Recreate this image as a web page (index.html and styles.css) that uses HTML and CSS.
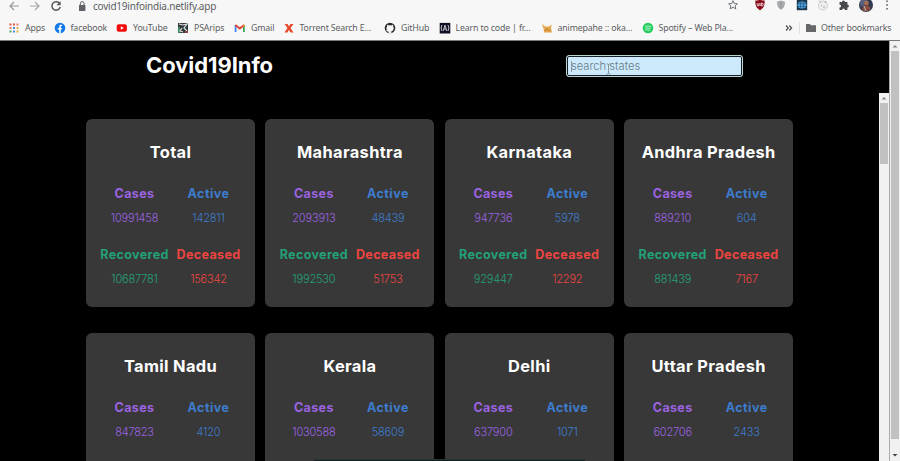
FILE: index.html
```html
<!DOCTYPE html>
<html lang="en">
<head>
<meta charset="utf-8">
<title>Covid19Info</title>
<link rel="stylesheet" href="styles.css">
</head>
<body>
<div class="browser">
  <div class="toolbar">
    <svg class="ic" viewBox="0 0 12 12"><path d="M11 6H2M6 2L2 6l4 4" fill="none" stroke="#96999c" stroke-width="1.2"/></svg>
    <svg class="ic" viewBox="0 0 12 12"><path d="M1 6h9M6 2l4 4-4 4" fill="none" stroke="#a5a7a9" stroke-width="1.2"/></svg>
    <svg class="ic" viewBox="0 0 12 12"><path d="M9.7 3.7A4.2 4.2 0 1 0 10.2 7" fill="none" stroke="#55585b" stroke-width="1.5"/><path d="M10.6 1v4.2H6.4z" fill="#55585b"/></svg>
    <svg class="ic lock" viewBox="0 0 12 12"><path d="M3 5h6.4v6H3z" fill="#5f6368"/><path d="M4.4 5V3.4a1.8 1.8 0 0 1 3.6 0V5" fill="none" stroke="#5f6368"/></svg>
    <span class="url">covid19infoindia.netlify.app</span>
    <div class="tools">
      <svg class="ic" viewBox="0 0 12 12"><path d="M6 1.7l1.3 2.8 3.1.3-2.3 2.1.7 3L6 8.3 3.2 9.900l.7-3L1.600 4.800l3.100-.3z" fill="none" stroke="#5f6368" stroke-width=".9"/></svg>
      <svg class="ic" viewBox="0 0 12 12"><path d="M6 .5c1.500 1 3 1.100 4.700 1.100 0 4.400-.5 7.400-4.700 9.700C1.800 9 1.300 6 1.300 1.600 3 1.600 4.500 1.500 6 .5z" fill="#880d18"/><path d="M3.200 4.300v1.900a.8.8 0 0 0 1.600 0V4.300M6 4v3M7.300 4.200h1c1.300 0 1.300 2.600 0 2.600h-1z" fill="none" stroke="#fff" stroke-width=".8"/></svg>
      <svg class="ic" viewBox="0 0 12 12"><path d="M6 1.500l4 1.300c0 4-.8 6.200-4 8-3.200-1.800-4-4-4-8z" fill="#a9abad"/><path d="M6 3v6.500" stroke="#8f9294"/></svg>
      <svg class="ic" viewBox="0 0 12 12"><path d="M.8.8h10.400v10.400H.8z" fill="#19364c"/><ellipse cx="6" cy="6" rx="4.500" ry="3.500" fill="#4c9dd5"/><path d="M2 4.500h8M2 7.500h8M4.500 2v8M7.500 2v8" stroke="#245d87" stroke-width=".7"/></svg>
      <svg class="ic" viewBox="0 0 12 12"><circle cx="6" cy="6.500" r="4.500" fill="#eee" stroke="#cfcfcf"/><path d="M2 1.500l2 2M4 6l1 1M8 4l1-2M6 8h2" stroke="#aaa"/></svg>
      <svg class="ic" viewBox="0 0 12 12"><path d="M1.500 3H4a1.500 1.500 0 0 1 3 0h2.400v2.600a1.500 1.500 0 0 1 0 3V11H7a1.500 1.500 0 0 0-3 0H1.500V8.500a1.500 1.500 0 0 0 0-3z" fill="#484b4e"/></svg>
      <svg class="ic avatar" viewBox="0 0 14 14"><circle cx="7" cy="7" r="7" fill="#303a52"/><path d="M1 4a7 7 0 0 1 8-3.500L7 6 2 9z" fill="#56617d"/><circle cx="7.500" cy="5" r="2.300" fill="#a96e50"/><path d="M3 12c0-6 8-6 8.500-1A7 7 0 0 1 3 12z" fill="#8c4c3c"/><path d="M5 8l2 5" stroke="#bbb"/></svg>
      <svg class="ic" viewBox="0 0 12 12"><path d="M5.300 1.500h1.500V3H5.300zM5.300 5.200h1.500v1.500H5.300zM5.300 9h1.500v1.500H5.300z" fill="#55585b"/></svg>
    </div>
  </div>
  <div class="bookmarks">
    <div class="bm"><svg class="ic" viewBox="0 0 12 12"><path d="M1.500 1.500h2v2h-2zM5 1.500h2v2H5z" fill="#df5549"/><path d="M8.500 1.500h2v2h-2zM1.500 5h2v2h-2z" fill="#e77d62"/><path d="M5 5h2v2H5zM5 8.500h2v2H5z" fill="#4b8ee8"/><path d="M8.500 5h2v2h-2zM8.500 8.500h2v2h-2z" fill="#e5b23c"/><path d="M1.500 8.500h2v2h-2z" fill="#4ca667"/></svg><span>Apps</span></div>
    <div class="bm"><svg class="ic" viewBox="0 0 12 12"><circle cx="6" cy="6" r="5.300" fill="#1679e8"/><path d="M5.200 11.300V7.500H3.800V5.900h1.400V4.700c0-1.700 1-2.300 2.900-1.900v1.300c-1-.1-1.300.1-1.300.8v1H8l-.3 1.600h-.9v3.800z" fill="#fff"/></svg><span>facebook</span></div>
    <div class="bm"><svg class="ic" viewBox="0 0 12 12"><rect x=".7" y="2.300" width="10.200" height="7.400" rx="2" fill="#f20d0d"/><path d="M4.800 4.300L7.800 6l-3 1.700z" fill="#fff"/></svg><span>YouTube</span></div>
    <div class="bm"><svg class="ic" viewBox="0 0 12 12"><path d="M1 1h10v10H1z" fill="#303c3c"/><path d="M1 5h2v6H1z" fill="#3f8a61"/><path d="M2 2l4 1 4-1-3 4 3 3M5 6l-2 3 3 1" fill="none" stroke="#ddd" stroke-width="1.200"/><path d="M8 9h3v2H8z" fill="#963e3e"/></svg><span>PSArips</span></div>
    <div class="bm"><svg class="ic" viewBox="0 0 12 12"><path d="M1.600 10V3" stroke="#4285f4" stroke-width="1.800"/><path d="M9.900 10V3" stroke="#34a853" stroke-width="1.800"/><path d="M1.300 3l4.500 3.500L10.200 3" fill="none" stroke="#e04438" stroke-width="1.900"/><path d="M8.900 4.100l1.900-1.500v2h-1.900z" fill="#f1b51d"/></svg><span>Gmail</span></div>
    <div class="bm"><svg class="ic" viewBox="0 0 12 12"><path d="M1.500 2h3L6 4.300 7.500 2h3L7.600 6l2.900 4.500h-3L6 8l-1.500 2.500h-3L4.400 6z" fill="#e64b2e"/></svg><span>Torrent Search E...</span></div>
    <div class="bm"><svg class="ic" viewBox="0 0 12 12"><circle cx="6" cy="6" r="5.300" fill="#282a2d"/><path d="M4.600 11.600V9.300C2.900 9 2.300 7.700 2.500 6c0-.7.200-1.100.6-1.500-.2-.6-.1-1.200.1-1.700.6 0 1.200.3 1.700.7.800-.2 1.600-.2 2.400 0 .5-.4 1.100-.7 1.700-.7.200.5.200 1.100.1 1.700.4.400.6.900.6 1.500 0 2-.8 3-2.300 3.300v2.300z" fill="#f6f6f6"/><path d="M2.200 8.300c.8.300.8 1.500 2.400 1.300" fill="none" stroke="#f6f6f6" stroke-width=".7"/></svg><span>GitHub</span></div>
    <div class="bm"><svg class="ic" viewBox="0 0 12 12"><path d="M.7.900h10.600v10.600H.7z" fill="#101126"/><path d="M3 3q-1.800 3 0 6M9 3q1.800 3 0 6M4.200 9L6 3.200 7.800 9M5 7h2" fill="none" stroke="#eee" stroke-width=".8"/></svg><span>Learn to code | fr...</span></div>
    <div class="bm"><svg class="ic" viewBox="0 0 12 12"><path d="M.8 1.700L4 4.500l3.500.2 3.200-2.200-.7 3 .8 5H3L2.700 7z" fill="#e8a747"/><path d="M3.500 8.500l3-1 3 1.500M5 5.500l1 1" fill="none" stroke="#a7652b" stroke-width=".7"/></svg><span>animepahe :: oka...</span></div>
    <div class="bm"><svg class="ic" viewBox="0 0 12 12"><circle cx="6" cy="6" r="5.300" fill="#25ce60"/><path d="M2.900 4.300q3.400-1 6.400.6M3.200 6.200q3-.8 5.400.6M3.500 8q2.400-.6 4.400.5" fill="none" stroke="#c7f4d5" stroke-width=".9"/></svg><span>Spotify – Web Pla...</span></div>
    <svg class="ic more" viewBox="0 0 12 12"><path d="M3 3.500L5.300 6 3 8.500M6.300 3.500L8.600 6 6.300 8.500" fill="none" stroke="#4c4f52" stroke-width="1.200"/></svg>
    <div class="other"><svg class="ic" viewBox="0 0 12 12"><path d="M1 2h3.800L6 3.200h5V10H1z" fill="#65686b"/></svg><span>Other bookmarks</span></div>
  </div>
</div>
<div class="viewport">
  <div class="page">
    <header class="header">
      <h1>Covid19Info</h1>
      <div class="search"><span>search states</span>
        <svg class="caret" viewBox="0 0 5 12"><path d="M.5 1h1.500l.5.500.5-.5h1.500M2.500 1.500v9M.5 11h1.500l.5-.5.5.5h1.500" fill="none" stroke="#65747c" stroke-width=".7"/></svg></div>
    </header>
    <div class="body">
      <main class="cards">
        <section class="card"><h2>Total</h2><div class="stats">
          <div class="stat cases"><b>Cases</b><span>10991458</span></div><div class="stat active"><b>Active</b><span>142811</span></div>
          <div class="stat rec"><b>Recovered</b><span>10687781</span></div><div class="stat dec"><b>Deceased</b><span>156342</span></div></div></section>
        <section class="card"><h2>Maharashtra</h2><div class="stats">
          <div class="stat cases"><b>Cases</b><span>2093913</span></div><div class="stat active"><b>Active</b><span>48439</span></div>
          <div class="stat rec"><b>Recovered</b><span>1992530</span></div><div class="stat dec"><b>Deceased</b><span>51753</span></div></div></section>
        <section class="card"><h2>Karnataka</h2><div class="stats">
          <div class="stat cases"><b>Cases</b><span>947736</span></div><div class="stat active"><b>Active</b><span>5978</span></div>
          <div class="stat rec"><b>Recovered</b><span>929447</span></div><div class="stat dec"><b>Deceased</b><span>12292</span></div></div></section>
        <section class="card"><h2>Andhra Pradesh</h2><div class="stats">
          <div class="stat cases"><b>Cases</b><span>889210</span></div><div class="stat active"><b>Active</b><span>604</span></div>
          <div class="stat rec"><b>Recovered</b><span>881439</span></div><div class="stat dec"><b>Deceased</b><span>7167</span></div></div></section>
        <section class="card"><h2>Tamil Nadu</h2><div class="stats">
          <div class="stat cases"><b>Cases</b><span>847823</span></div><div class="stat active"><b>Active</b><span>4120</span></div></div></section>
        <section class="card"><h2>Kerala</h2><div class="stats">
          <div class="stat cases"><b>Cases</b><span>1030588</span></div><div class="stat active"><b>Active</b><span>58609</span></div></div></section>
        <section class="card"><h2>Delhi</h2><div class="stats">
          <div class="stat cases"><b>Cases</b><span>637900</span></div><div class="stat active"><b>Active</b><span>1071</span></div></div></section>
        <section class="card"><h2>Uttar Pradesh</h2><div class="stats">
          <div class="stat cases"><b>Cases</b><span>602706</span></div><div class="stat active"><b>Active</b><span>2433</span></div></div></section>
      </main>
      <div class="scroll inner"><svg class="arrow" viewBox="0 0 10 10"><path d="M2.500 6.500L5 4l2.500 2.500z" fill="#888"/></svg><div class="thumb"></div></div>
    </div>
  </div>
  <div class="scroll outer"><svg class="arrow" viewBox="0 0 10 10"><path d="M2.500 6.500L5 4l2.500 2.500z" fill="#888"/></svg><div class="thumb"></div><svg class="arrow down" viewBox="0 0 10 10"><path d="M2.500 4L5 6.500 7.500 4z" fill="#444"/></svg></div>
  <div class="strip"></div>
</div>
</body>
</html>
```
FILE: styles.css
```css
* { box-sizing: border-box; }
body { margin: 0; width: 900px; height: 461px; overflow: hidden; background: #000; font-family: Inter, "Open Sans", sans-serif; display: flex; flex-direction: column; }
.browser { height: 41px; flex: none; background: #f7f7f7; border-bottom: 1px solid #777b7a; font-family: "Noto Sans", sans-serif; color: #5b5e61; overflow: hidden; }
.ic { width: 12px; height: 12px; display: block; flex: none; }
.toolbar { height: 12px; display: grid; grid-template-columns: 21px 21px 26px 17px 1fr 173px; padding-left: 8px; align-items: center; }
.toolbar .ic { margin-top: -1px; }
.url { font-size: 10px; line-height: 12px; letter-spacing: -.22px; white-space: nowrap; }
.tools { display: grid; grid-template-columns: 26.5px 21px 21px 21px 21px 21px 22px 12px; }
.toolbar .avatar { width: 14px; height: 14px; margin-top: -2px; }
.bookmarks { height: 28px; margin-top: 2px; display: grid; grid-template-columns: 45.500px 62.500px 61px 57px 48.500px 101.500px 54.500px 102px 101px 141.500px 17px 1fr; padding-left: 8px; align-items: center; font-size: 8.800px; letter-spacing: -.16px; white-space: nowrap; }
.bm { display: flex; align-items: center; gap: 5px; }
.other { display: flex; align-items: center; gap: 4px; padding-left: 5px; margin-left: -1px; border-left: 1px solid #dedede; }
.viewport { position: relative; display: flex; height: 420px; }
.page { width: 889px; display: flex; flex-direction: column; }
.header { height: 52px; flex: none; display: flex; justify-content: space-between; align-items: center; padding: 0 146px; }
h1 { margin: 0; color: #fff; font-size: 22px; line-height: 26px; letter-spacing: -.07px; white-space: nowrap; margin-top: -4px; }
.search { position: relative; width: 177px; height: 22px; margin-top: -2px; background: #cdeafd; border: 1px solid #b9d4d0; outline: 1px solid #172028; outline-offset: -2px; border-radius: 3px; padding-left: 4px; font-size: 11.200px; line-height: 20px; font-weight: 300; color: #687a86; }
.search::before { content: ""; position: absolute; left: 4px; top: 5px; width: 1px; height: 11px; background: #889aa5; }
.caret { position: absolute; width: 5px; height: 12px; left: 39px; top: 7px; }
.body { height: 368px; display: flex; justify-content: space-between; overflow: hidden; }
.cards { display: grid; grid-template-columns: repeat(4, 169px); gap: 26px 10.400px; padding: 26px 0 0 86px; }
.card { height: 187.500px; background: #383838; border-radius: 6px; padding-top: 22px; text-align: center; }
h2 { margin: 0 0 23px; font-size: 16.400px; letter-spacing: .36px; line-height: 22px; color: #fff; white-space: nowrap; }
.stats { display: grid; grid-template-columns: 69px 65px; column-gap: 7px; row-gap: 21px; justify-content: center; }
.stat { display: flex; flex-direction: column; align-items: center; gap: 8px; white-space: nowrap; }
.stat b { font-size: 12.500px; line-height: 16px; letter-spacing: .36px; }
.active b { letter-spacing: .45px; }
.stat span { font-size: 11px; letter-spacing: -.18px; line-height: 16px; font-weight: 300; }
.cases { color: #9b63e0; }
.active { color: #3d7cce; }
.rec { color: #23a078; }
.dec { color: #ed4540; }
.scroll { background: #f1f1f1; display: flex; flex-direction: column; }
.inner { width: 10px; }
.outer { width: 11px; border-left: 1px solid #aaa; }
.arrow { width: 10px; height: 10px; flex: none; }
.thumb { background: #c1c1c1; width: 8px; margin-left: 1px; height: 61px; }
.outer .thumb { height: 388px; }
.down { margin-top: 11px; }
.strip { position: absolute; left: 314px; top: 418px; width: 271px; height: 2px; background: #152022; border-top: 1px solid #293638; }
```
